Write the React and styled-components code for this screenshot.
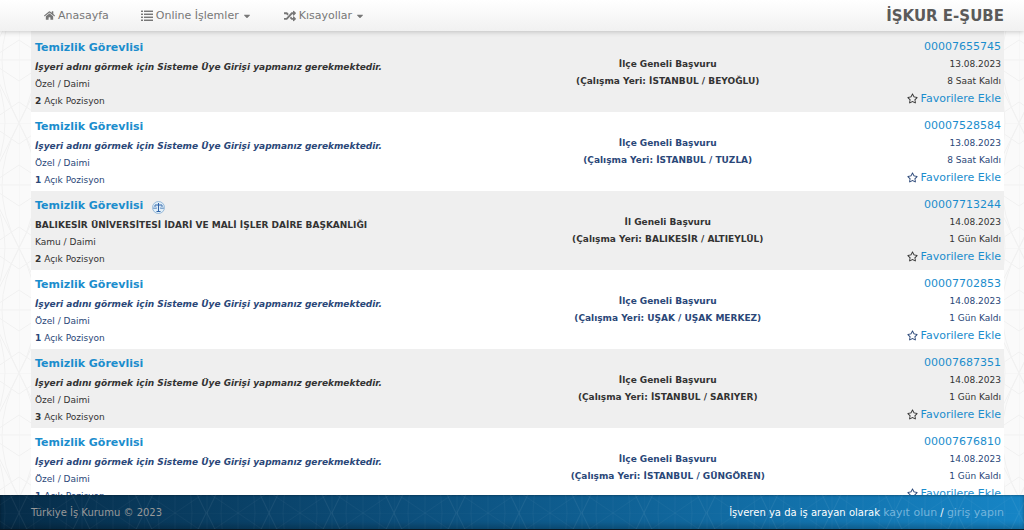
import React from "react";
import styled, { createGlobalStyle } from "styled-components";
import { FaHome, FaRandom, FaCaretDown, FaRegStar } from "react-icons/fa";

const GlobalStyle = createGlobalStyle`
  * { box-sizing: border-box; }
  html { height: 100%; overflow: hidden; }
  body {
    margin: 0;
    height: 100%;
    overflow: hidden;
    background: #fafafa;
    font-family: Verdana, "DejaVu Sans", sans-serif;
    font-size: 9px;
    line-height: 17px;
    color: #333;
  }
  #root { height: 100%; }
  a { color: #1b8dcd; text-decoration: none; }
`;

const Page = styled.div`
  position: relative;
  isolation: isolate;
  display: flex;
  flex-direction: column;
  height: 100%;
`;

const Backdrop = styled.svg`
  position: absolute;
  inset: 0;
  width: 100%;
  height: 100%;
  z-index: -1;
`;

const Header = styled.header`
  flex: none;
  z-index: 1;
  display: flex;
  align-items: center;
  justify-content: space-between;
  height: 31px;
  padding: 0 20px 0 44px;
  background: linear-gradient(#fff, #f1f1f1);
  box-shadow: 0 1px 5px rgba(0, 0, 0, 0.2);
`;

const Nav = styled.nav`
  display: flex;
  gap: 32px;
`;

const navItem = `
  display: flex;
  align-items: center;
  gap: 3px;
  padding: 0;
  border: 0;
  background: none;
  font: inherit;
  font-size: 11px;
  line-height: 17px;
  color: #777;
`;

const NavLink = styled.a`
  ${navItem}
  && { color: #777; }
`;

const NavButton = styled.button`
  ${navItem}
`;

const Brand = styled.h1`
  margin: 0;
  font-size: 15px;
  line-height: 20px;
  color: #5a5a5a;
`;

const List = styled.main`
  flex: 1;
  min-height: 0;
  overflow: hidden;
  margin: 0 20px 0 31px;
  padding-top: 2px;
  background: #efefef;
`;

const Row = styled.article`
  display: grid;
  grid-template-columns: 50% 31% 19%;
  padding: 4px 3px 2px 4px;
  background: #efefef;
  color: #333;
  &:nth-child(even) {
    background: #fff;
    color: #2a4778;
  }
`;

const Title = styled.h2`
  display: flex;
  align-items: center;
  gap: 9px;
  margin: 0;
  font-size: 11px;
  line-height: 22px;
  svg { margin-top: 3px; }
`;

const Employer = styled.strong`
  display: block;
  font-style: ${(p) => (p.$hidden ? "italic" : "normal")};
`;

const Line = styled.div``;

const Place = styled.div`
  padding-top: 19px;
  text-align: center;
  font-weight: bold;
`;

const Meta = styled.div`
  padding-top: 1px;
  text-align: right;
`;

const MetaLink = styled.a`
  font-size: 11px;
`;

const Favorite = styled.div`
  display: flex;
  justify-content: flex-end;
  align-items: center;
  gap: 3px;
`;

const Footer = styled.footer`
  position: relative;
  isolation: isolate;
  flex: none;
  display: flex;
  align-items: center;
  justify-content: space-between;
  height: 35px;
  padding: 0 20px 0 31px;
  border-bottom: 1px solid #0a1722;
  background: linear-gradient(90deg, #062c48, #0c4f7c 40%, #1685c6);
  box-shadow: inset 0 1px 2px rgba(0, 0, 0, 0.25), inset 0 -4px 5px rgba(0, 0, 0, 0.2);
  font-size: 10px;
  color: #999;
`;

const SignIn = styled.div`
  color: #fff;
  a {
    font-size: 11px;
    color: #74b4dc;
  }
`;

const Cell = () => (
  <>
    <path d="M0 0V125M31 0V125M0 0H62M0 62H62M0 0L62 125M62 0L0 125M0 42L62 83M62 42L0 83M0 21L31 0L62 21M0 104L31 125L62 104" />
    <path d="M0 0Q34 62 0 125M62 0Q28 62 62 125M31 62Q65 0 31 -62M31 62Q-3 0 31 -62M31 62Q65 125 31 187M31 62Q-3 125 31 187" />
  </>
);

function Lattice({ id, color, y }) {
  return (
    <Backdrop aria-hidden="true">
      <defs>
        <pattern id={id} x="19" y={y} width="125" height="125" patternUnits="userSpaceOnUse">
          <g fill="none" stroke={color} strokeWidth="1">
            <Cell />
            <g transform="translate(63 0)"><Cell /></g>
          </g>
        </pattern>
      </defs>
      <rect width="100%" height="100%" fill={`url(#${id})`} />
    </Backdrop>
  );
}

function ListIcon() {
  return (
    <svg width="12" height="11" viewBox="0 0 12 11" fill="currentColor" aria-hidden="true">
      <path d="M0 1h2v1H0zM3 1h9v1H3zM0 4h2v1H0zM3 4h9v1H3zM0 7h2v1H0zM3 7h9v1H3zM0 10h2v1H0zM3 10h9v1H3z" />
      <path opacity=".45" d="M0 0h2v1H0zM3 0h9v1H3zM0 3h2v1H0zM3 3h9v1H3zM0 6h2v1H0zM3 6h9v1H3zM0 9h2v1H0zM3 9h9v1H3z" />
    </svg>
  );
}

function Scales() {
  return (
    <svg width="13" height="13" viewBox="0 0 26 26" fill="none" stroke="#4d7fb8" role="img" aria-label="Kamu">
      <circle cx="13" cy="13" r="12" fill="#e2eff8" stroke="#7fa9d2" strokeWidth="1.5" />
      <path d="M13 4V21M9 21H17M6 8H20" stroke="#2f62a8" strokeWidth="2" />
      <path d="M6 8L3 15H9ZM20 8L17 15H23Z" strokeWidth="1.3" />
    </svg>
  );
}

const HIDDEN = "İşyeri adını görmek için Sisteme Üye Girişi yapmanız gerekmektedir.";

const jobs = [
  { no: "00007655745", kind: "Özel", count: 2, scope: "İlçe", place: "İSTANBUL / BEYOĞLU", date: "13.08.2023", left: "8 Saat Kaldı" },
  { no: "00007528584", kind: "Özel", count: 1, scope: "İlçe", place: "İSTANBUL / TUZLA", date: "13.08.2023", left: "8 Saat Kaldı" },
  { no: "00007713244", kind: "Kamu", count: 2, scope: "İl", place: "BALIKESİR / ALTIEYLÜL", date: "14.08.2023", left: "1 Gün Kaldı", employer: "BALIKESİR ÜNİVERSİTESİ İDARİ VE MALİ İŞLER DAİRE BAŞKANLIĞI" },
  { no: "00007702853", kind: "Özel", count: 1, scope: "İlçe", place: "UŞAK / UŞAK MERKEZ", date: "14.08.2023", left: "1 Gün Kaldı" },
  { no: "00007687351", kind: "Özel", count: 3, scope: "İlçe", place: "İSTANBUL / SARIYER", date: "14.08.2023", left: "1 Gün Kaldı" },
  { no: "00007676810", kind: "Özel", count: 1, scope: "İlçe", place: "İSTANBUL / GÜNGÖREN", date: "14.08.2023", left: "1 Gün Kaldı" },
];

function Job({ job }) {
  return (
    <Row>
      <div>
        <Title>
          <a href="#ilan">Temizlik Görevlisi</a>
          {job.employer && <Scales />}
        </Title>
        <Employer $hidden={!job.employer}>{job.employer || HIDDEN}</Employer>
        <Line>{job.kind} / Daimi</Line>
        <Line><b>{job.count}</b> Açık Pozisyon</Line>
      </div>
      <Place>
        <Line>{job.scope} Geneli Başvuru</Line>
        <Line>(Çalışma Yeri: {job.place})</Line>
      </Place>
      <Meta>
        <Line><MetaLink href="#ilan">{job.no}</MetaLink></Line>
        <Line>{job.date}</Line>
        <Line>{job.left}</Line>
        <Favorite>
          <FaRegStar size={11} />
          <MetaLink href="#favori">Favorilere Ekle</MetaLink>
        </Favorite>
      </Meta>
    </Row>
  );
}

export default function App() {
  return (
    <Page>
      <GlobalStyle />
      <Lattice id="page-lattice" color="#f1f1f1" y={-2} />
      <Header>
        <Nav>
          <NavLink href="#anasayfa"><FaHome size={11} />Anasayfa</NavLink>
          <NavButton type="button"><ListIcon />Online İşlemler<FaCaretDown size={10} /></NavButton>
          <NavButton type="button"><FaRandom size={12} />Kısayollar<FaCaretDown size={10} /></NavButton>
        </Nav>
        <Brand>İŞKUR E-ŞUBE</Brand>
      </Header>
      <List>
        {jobs.map((job) => <Job key={job.no} job={job} />)}
      </List>
      <Footer>
        <Lattice id="footer-lattice" color="rgba(255,255,255,0.03)" y={18} />
        <span>Türkiye İş Kurumu © 2023</span>
        <SignIn>
          İşveren ya da iş arayan olarak <a href="#kayit">kayıt olun</a> / <a href="#giris">giriş yapın</a>
        </SignIn>
      </Footer>
    </Page>
  );
}
